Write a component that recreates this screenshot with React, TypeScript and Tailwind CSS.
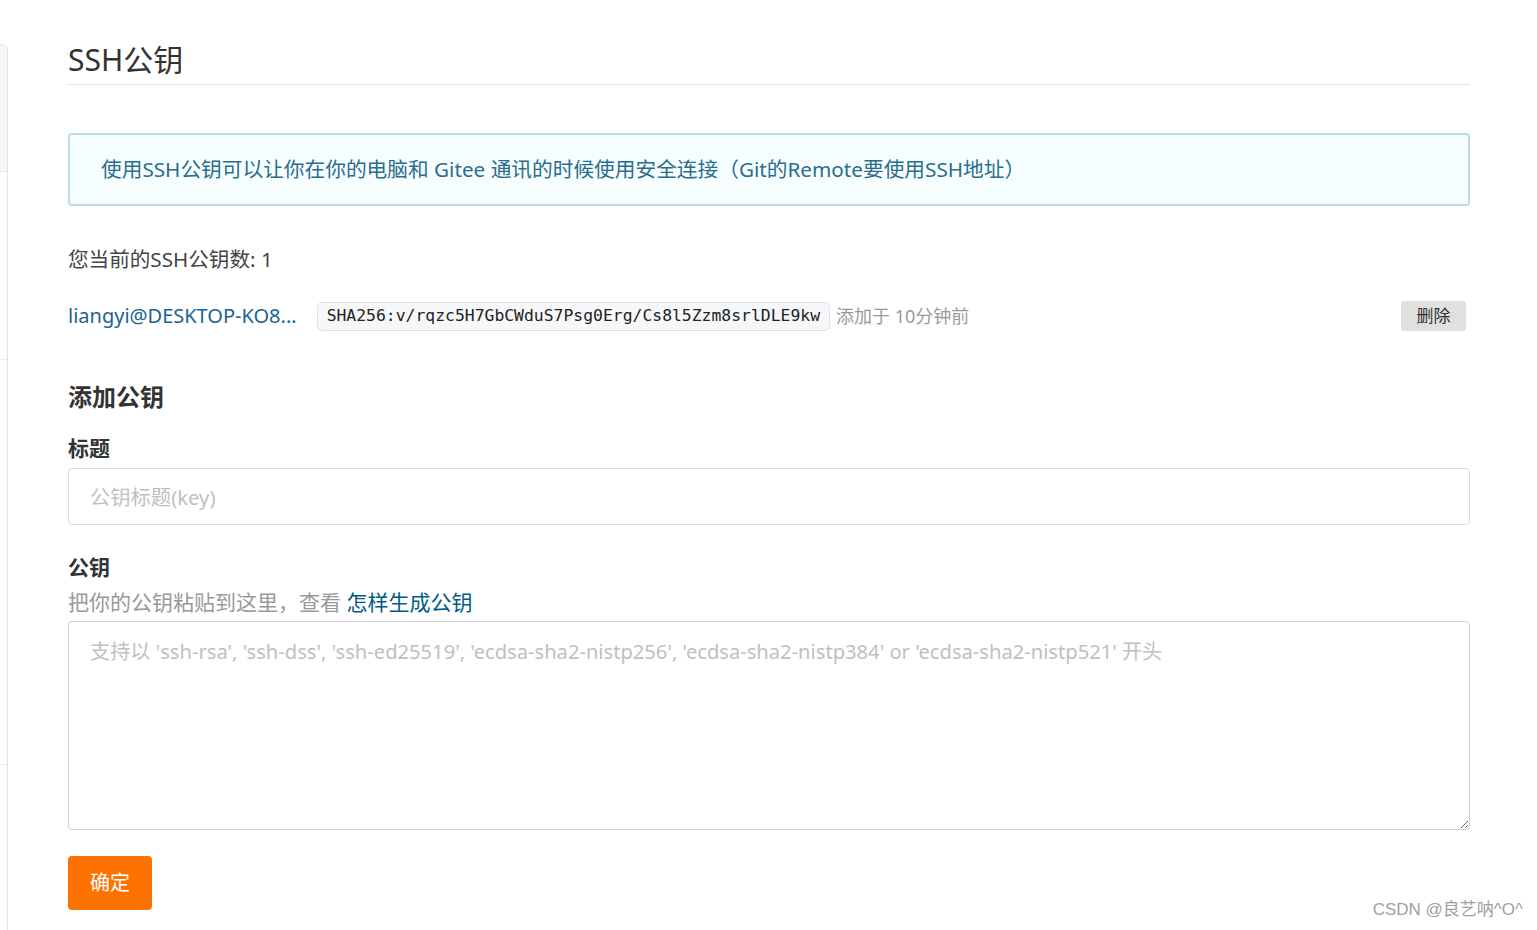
import React from "react";

const font = { fontFamily: '"Noto Sans", "Noto Sans CJK SC", sans-serif' };

export default function App() {
  return (
    <div
      className="relative flex h-[930px] w-full overflow-hidden bg-white"
      style={font}
    >
      {/* left sidebar edge */}
      <div className="mt-[44px] flex w-[8px] shrink-0 flex-col rounded-tr-[6px] border-r border-t border-[#e2e2e2]">
        <div className="h-[127px] rounded-tr-[6px] border-b border-[#e6e6e6] bg-[#f7f7f7]" />
        <div className="h-[188px] border-b border-[#ececec]" />
        <div className="h-[405px] border-b border-[#ececec]" />
      </div>

      <main className="flex flex-1 flex-col pl-[60px] pr-[67px]">
        <div className="border-b border-[#e4e4e4] pb-[4px] pt-[40px]">
          <h1 className="text-[30px] leading-[40px] text-[#333]">SSH公钥</h1>
        </div>

        <div className="mt-[48px] flex h-[73px] items-center rounded-[4px] border-2 border-[#bcdde6] bg-[#f6feff] pl-[31px] text-[20.7px] text-[#2a6d8c]">
          使用SSH公钥可以让你在你的电脑和 Gitee 通讯的时候使用安全连接（Git的Remote要使用SSH地址）
        </div>

        <div className="mt-[39px] text-[20.6px] leading-[28px] text-[#444]">
          您当前的SSH公钥数: 1
        </div>

        <div className="mt-[28px] flex h-[30px] items-center">
          <span className="mr-[20px] text-[20px] text-[#1c6392]">
            liangyi@DESKTOP-KO8...
          </span>
          <span
            className="flex h-[29px] items-center rounded-[5px] border border-[#e2e2e6] bg-[#f6f7f9] px-[9px] text-[16.4px] text-[#222]"
            style={{ fontFamily: '"DejaVu Sans Mono", "Liberation Mono", monospace' }}
          >
            SHA256:v/rqzc5H7GbCWduS7Psg0Erg/Cs8l5Zzm8srlDLE9kw
          </span>
          <span className="ml-[6px] text-[18px] text-[#9a9a9a]">添加于 10分钟前</span>
          <button className="ml-auto mr-[4px] flex h-[30px] w-[65px] items-center justify-center rounded-[3px] bg-[#e0e0e0] text-[17px] text-[#333]">
            删除
          </button>
        </div>

        <h2 className="mt-[51px] text-[24px] font-bold leading-[30px] text-[#333]">
          添加公钥
        </h2>

        <label className="mt-[22px] text-[21px] font-bold leading-[28px] text-[#333]">
          标题
        </label>
        <input
          className="mt-[6px] h-[57px] w-full rounded-[4px] border border-[#dcdcdf] pl-[21px] text-[20.3px] outline-none placeholder:text-[#c0c0c0]"
          placeholder="公钥标题(key)"
          style={font}
        />

        <label className="mt-[28px] text-[21px] font-bold leading-[28px] text-[#333]">
          公钥
        </label>
        <div className="mt-[7px] text-[21px] leading-[28px] text-[#999]">
          把你的公钥粘贴到这里，查看 <span className="text-[#005b85]">怎样生成公钥</span>
        </div>
        <textarea
          className="mt-[5px] h-[209px] w-full rounded-[4px] border border-[#d0cfdb] pl-[21px] pt-[15px] text-[20.15px] leading-[28px] outline-none placeholder:text-[#c0c0c0]"
          placeholder="支持以 'ssh-rsa', 'ssh-dss', 'ssh-ed25519', 'ecdsa-sha2-nistp256', 'ecdsa-sha2-nistp384' or 'ecdsa-sha2-nistp521' 开头"
          style={font}
        />

        <div className="mt-[26px]">
          <button className="flex h-[54px] w-[84px] items-center justify-center rounded-[4px] bg-[#fe7300] text-[20px] text-white">
            确定
          </button>
        </div>
      </main>

      <div
        className="absolute bottom-[8px] right-[14px] text-[17px] text-[#a0a0a0]"
        style={{ fontFamily: '"Liberation Sans", "Noto Sans CJK SC", sans-serif' }}
      >
        CSDN @良艺呐^O^
      </div>
    </div>
  );
}
